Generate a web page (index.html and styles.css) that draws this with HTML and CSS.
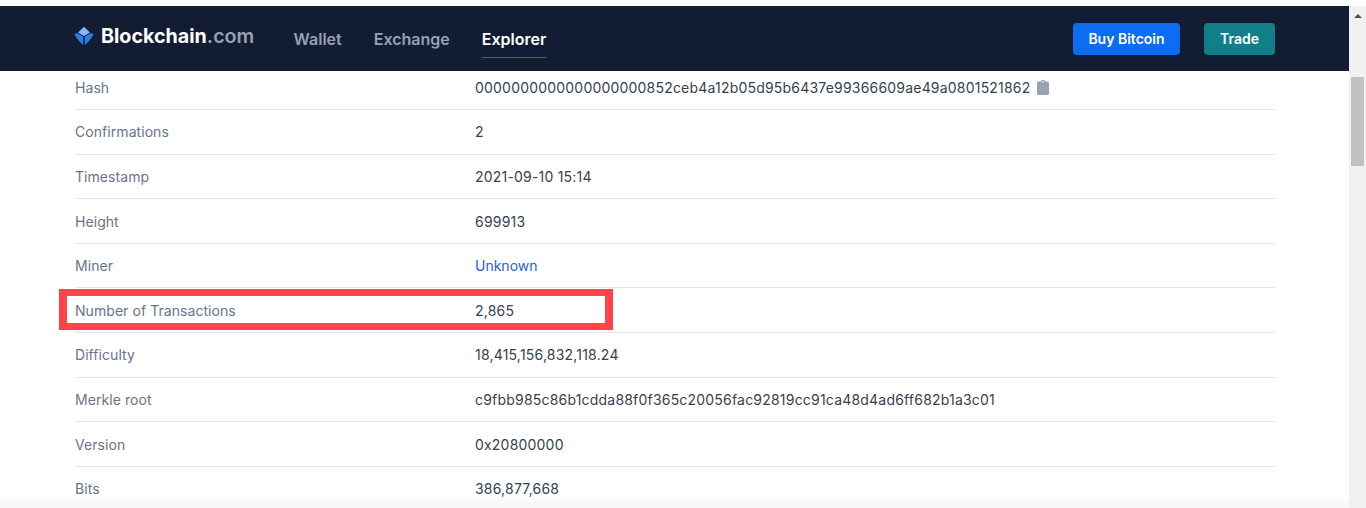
FILE: index.html
```html
<!DOCTYPE html>
<html lang="en">
<head>
    <meta charset="UTF-8">
    <meta name="viewport" content="width=device-width, initial-scale=1.0">
    <title>Block 699913 - Blockchain.com Explorer</title>
    <link rel="stylesheet" href="styles.css">
</head>
<body>
    <div class="window">
        <div class="page">
            <header class="topbar">
                <a class="logo" href="#">
                    <svg class="logo-icon" width="20" height="20" viewBox="0 0 20 20">
                        <path fill="#85b5fb" d="M10 .8 16 6.4 10 9.9 4 6.4Z"/>
                        <path fill="#2a7de9" d="M.4 8.6 3 6.9 9.2 10.6V19.2Q5 16 .4 8.6Z"/>
                        <path fill="#2a7de9" d="M19.6 8.6 17 6.9 10.8 10.6V19.2Q15 16 19.6 8.6Z"/>
                    </svg>
                    <span class="logo-name">Blockchain<span class="logo-tld">.com</span></span>
                </a>
                <nav class="nav">
                    <a href="#">Wallet</a>
                    <a href="#">Exchange</a>
                    <a href="#" class="active">Explorer</a>
                </nav>
                <div class="actions">
                    <a href="#" class="btn btn-buy">Buy Bitcoin</a>
                    <a href="#" class="btn btn-trade">Trade</a>
                </div>
            </header>

            <div class="details">
                <div class="row">
                    <div class="label">Hash</div>
                    <div class="value">
                        0000000000000000000852ceb4a12b05d95b6437e99366609ae49a0801521862
                        <svg class="copy" width="12" height="15" viewBox="0 0 12 15">
                            <path fill="#9aa1b1" d="M1.5 1.6H4V.9Q4 0 5 0H7Q8 0 8 .9V1.6H10.5Q12 1.6 12 3V13.5Q12 15 10.5 15H1.5Q0 15 0 13.5V3Q0 1.6 1.5 1.6Z"/>
                            <path fill="#dfe2e8" d="M5 1H7V2.2H5Z"/>
                        </svg>
                    </div>
                </div>
                <div class="row">
                    <div class="label">Confirmations</div>
                    <div class="value">2</div>
                </div>
                <div class="row">
                    <div class="label">Timestamp</div>
                    <div class="value">2021-09-10 15:14</div>
                </div>
                <div class="row">
                    <div class="label">Height</div>
                    <div class="value">699913</div>
                </div>
                <div class="row">
                    <div class="label">Miner</div>
                    <div class="value"><a href="#" class="link">Unknown</a></div>
                </div>
                <div class="row">
                    <div class="label">Number of Transactions</div>
                    <div class="value">2,865</div>
                    <div class="highlight"></div>
                </div>
                <div class="row">
                    <div class="label">Difficulty</div>
                    <div class="value">18,415,156,832,118.24</div>
                </div>
                <div class="row">
                    <div class="label">Merkle root</div>
                    <div class="value">c9fbb985c86b1cdda88f0f365c20056fac92819cc91ca48d4ad6ff682b1a3c01</div>
                </div>
                <div class="row">
                    <div class="label">Version</div>
                    <div class="value">0x20800000</div>
                </div>
                <div class="row">
                    <div class="label">Bits</div>
                    <div class="value">386,877,668</div>
                </div>
            </div>
            <div class="bottom-fade"></div>
        </div>

        <div class="scrollbar">
            <div class="scroll-up"></div>
            <div class="scroll-thumb"></div>
        </div>
    </div>
</body>
</html>
```

FILE: styles.css
```css
html, body {
    height: 100%;
}
body {
    font-family: Inter, "Noto Sans", sans-serif;
    font-size: 14px;
    color: #353f52;
    margin: 0;
    padding-top: 6px;
    box-sizing: border-box;
    background-color: #fff;
    overflow: hidden;
}
a {
    text-decoration: none;
}
.window {
    display: flex;
    height: 100%;
}
.page {
    position: relative;
    flex: 1;
    overflow: hidden;
}

/* header */
.topbar {
    position: relative;
    z-index: 1;
    display: flex;
    align-items: center;
    height: 65px;
    padding: 0 74px;
    background-color: #121d33;
}
.logo {
    display: flex;
    align-items: center;
    gap: 7px;
    width: 219.6px;
    margin-top: -5px;
    font-size: 19.7px;
    font-weight: 700;
    color: #fff;
}
.logo-tld {
    color: #98a1b2;
    font-weight: 600;
}
.nav {
    display: flex;
    gap: 32px;
}
.nav a {
    display: block;
    padding: 9px 0 8px;
    border-bottom: 1px solid transparent;
    font-size: 16px;
    font-weight: 600;
    color: #98a1b2;
}
.nav a.active {
    color: #fff;
    border-bottom-color: #0c6cf2;
}
.actions {
    display: flex;
    gap: 24px;
    margin-left: auto;
}
.btn {
    display: block;
    height: 32px;
    padding: 0 15.5px;
    line-height: 32px;
    border-radius: 4px;
    font-weight: 600;
    color: #fff;
}
.btn-buy {
    background-color: #0c6cf2;
}
.btn-trade {
    padding: 0 16px;
    background-color: #117f88;
}

/* detail rows, the page is scrolled a little under the header */
.details {
    margin-top: -5.5px;
    padding: 0 74px 0 75px;
}
.row {
    position: relative;
    display: flex;
    align-items: center;
    height: 44.6px;
    border-bottom: 1px solid #e3e6ea;
    box-sizing: border-box;
}
.label {
    width: 400px;
    letter-spacing: 0.06px;
    color: #677489;
}
.value {
    display: flex;
    align-items: center;
    gap: 7px;
    letter-spacing: 0.2px;
}
.link {
    letter-spacing: 0;
    color: #1f62d8;
}
.copy {
    flex: none;
}

/* red box drawn over the screenshot */
.highlight {
    position: absolute;
    left: -16px;
    top: 0.5px;
    width: 554px;
    height: 41px;
    border: solid #ff4347;
    border-width: 7.5px 8px;
    box-sizing: border-box;
}
.bottom-fade {
    position: absolute;
    left: 0;
    right: 0;
    bottom: 0;
    height: 14px;
    background: linear-gradient(to bottom, rgba(245, 245, 245, 0), #f6f6f6);
}

/* browser scrollbar */
.scrollbar {
    flex: none;
    position: relative;
    width: 17px;
    background-color: #f1f1f1;
}
.scroll-up {
    position: absolute;
    left: 5px;
    top: 8px;
    border-left: 4px solid transparent;
    border-right: 4px solid transparent;
    border-bottom: 4px solid #505050;
}
.scroll-thumb {
    position: absolute;
    left: 2px;
    top: 71px;
    width: 13px;
    height: 89px;
    background-color: #c1c1c1;
}
```
